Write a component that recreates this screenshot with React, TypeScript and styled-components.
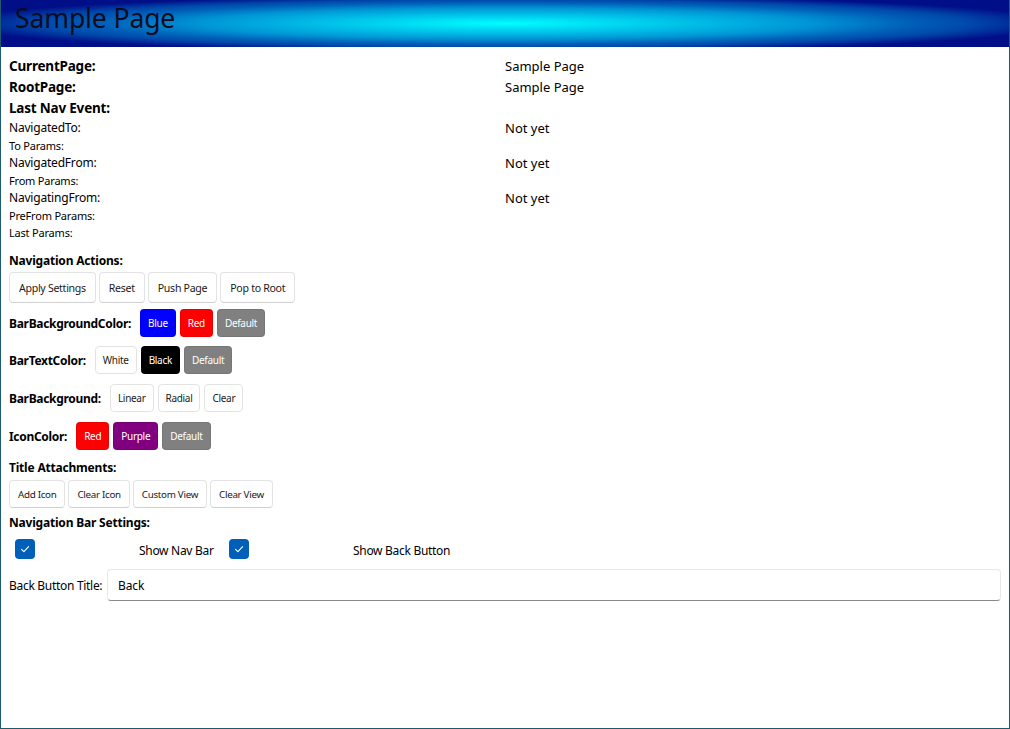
import React from "react";
import styled, { createGlobalStyle } from "styled-components";

const Global = createGlobalStyle`
  html, body { margin: 0; padding: 0; background: #fff; }
  body { font-family: "Noto Sans", "Open Sans", sans-serif; color: #000; }
  * { box-sizing: border-box; }
`;

const Frame = styled.div`
  width: 1010px;
  height: 729px;
  border: 1px solid #1d5a70;
  border-top: none;
  display: flex;
  flex-direction: column;
  overflow: hidden;
`;

const Header = styled.header`
  height: 47px;
  flex: none;
  background: radial-gradient(
    ellipse 55% 60% at 50% 50%,
    #00ffff 0%,
    #00d8f2 20%,
    #0095d5 55%,
    #0060b8 73%,
    #0048aa 84%,
    #000f88 100%
  );
  display: flex;
  align-items: flex-start;
  padding: 0 0 0 14px;
`;

const Title = styled.h1`
  margin: 0;
  font-family: "Noto Sans", sans-serif;
  font-weight: 400;
  font-size: 26.5px;
  letter-spacing: -0.1px;
  color: #0b0b22;
  line-height: normal;
`;

const Body = styled.main`
  padding: 9px 8px 0 8px;
  display: flex;
  flex-direction: column;
`;

const InfoGrid = styled.div`
  display: grid;
  grid-template-columns: 496px 1fr;
`;

const InfoLabel = styled.div<{ $bold?: boolean; $size: number; $h: number }>`
  font-size: ${(p) => p.$size}px;
  font-weight: ${(p) => (p.$bold ? 700 : 400)};
  height: ${(p) => p.$h}px;
  line-height: ${(p) => p.$h}px;
  white-space: nowrap;
  letter-spacing: -0.2px;
`;

const InfoValue = styled.div<{ $h: number }>`
  font-size: 13px;
  height: ${(p) => p.$h}px;
  line-height: ${(p) => p.$h}px;
  white-space: nowrap;
`;

const SectionLabel = styled.div<{ $mt: number }>`
  font-size: 12px;
  font-weight: 700;
  line-height: 17px;
  margin-top: ${(p) => p.$mt}px;
  letter-spacing: -0.2px;
`;

const ButtonRow = styled.div<{ $mt: number }>`
  display: flex;
  gap: 3px;
  margin-top: ${(p) => p.$mt}px;
`;

const ActionButton = styled.button<{ $h: number; $size: number; $pad: number }>`
  height: ${(p) => p.$h}px;
  padding: 0 ${(p) => p.$pad}px;
  font-family: "Noto Sans", sans-serif;
  font-size: ${(p) => p.$size}px;
  color: #1a1a1a;
  background: #fff;
  border: 1px solid #e3e3e3;
  border-bottom-color: #d0d0d0;
  border-radius: 4px;
  letter-spacing: -0.3px;
`;

const OptionRow = styled.div<{ $mt: number }>`
  display: flex;
  align-items: center;
  margin-top: ${(p) => p.$mt}px;
`;

const OptionLabel = styled.div`
  font-size: 12px;
  font-weight: 700;
  margin-right: 9px;
  letter-spacing: -0.3px;
`;

const OptionButtons = styled.div`
  display: flex;
  gap: 4px;
`;

const ColorButton = styled.button<{ $bg?: string; $fg?: string }>`
  height: 28px;
  padding: 0 7px;
  font-family: "Noto Sans", sans-serif;
  font-size: 10px;
  color: ${(p) => p.$fg ?? "#1a1a1a"};
  background: ${(p) => p.$bg ?? "#fff"};
  border: 1px solid ${(p) => (p.$bg ? "rgba(0,0,0,0.08)" : "#e3e3e3")};
  border-radius: 4px;
  letter-spacing: -0.3px;
`;

const CheckRow = styled.div`
  display: flex;
  align-items: center;
  margin-top: 7px;
  height: 22px;
`;

const CheckCell = styled.div`
  width: 130px;
  padding-left: 6px;
  display: flex;
  align-items: center;
`;

const CheckBox = styled.div`
  width: 20px;
  height: 20px;
  border-radius: 4px;
  background: #005fb8;
  display: flex;
  align-items: center;
  justify-content: center;
`;

const CheckText = styled.div<{ $w: number }>`
  width: ${(p) => p.$w}px;
  font-size: 12px;
  letter-spacing: -0.3px;
  padding-top: 2px;
`;

const EntryRow = styled.div`
  display: flex;
  align-items: center;
  margin-top: 9px;
`;

const EntryLabel = styled.div`
  font-size: 12px;
  width: 98px;
  letter-spacing: -0.3px;
`;

const Entry = styled.div`
  flex: 1;
  height: 32px;
  border: 1px solid #e8e8e8;
  border-bottom: 1px solid #8a8a8a;
  border-radius: 4px;
  padding-left: 10px;
  display: flex;
  align-items: center;
  font-size: 12px;
  letter-spacing: -0.1px;
`;

const Check = () => (
  <svg width="12" height="12" viewBox="0 0 12 12">
    <path d="M2.5 6.3 L4.9 8.6 L9.6 3.6" fill="none" stroke="#fff" strokeWidth="1.1" strokeLinecap="round" strokeLinejoin="round" />
  </svg>
);

const info: { label: string; value?: string; bold?: boolean; size: number; h: number }[] = [
  { label: "CurrentPage:", value: "Sample Page", bold: true, size: 13.5, h: 21 },
  { label: "RootPage:", value: "Sample Page", bold: true, size: 13.5, h: 21 },
  { label: "Last Nav Event:", bold: true, size: 13.5, h: 21 },
  { label: "NavigatedTo:", value: "Not yet", size: 12, h: 18 },
  { label: "To Params:", size: 11, h: 17 },
  { label: "NavigatedFrom:", value: "Not yet", size: 12, h: 18 },
  { label: "From Params:", size: 11, h: 17 },
  { label: "NavigatingFrom:", value: "Not yet", size: 12, h: 18 },
  { label: "PreFrom Params:", size: 11, h: 17 },
  { label: "Last Params:", size: 11, h: 17 },
];

export default function App() {
  return (
    <>
      <Global />
      <Frame>
        <Header>
          <Title>Sample Page</Title>
        </Header>
        <Body>
          <InfoGrid>
            {info.map((r) => (
              <React.Fragment key={r.label}>
                <InfoLabel $bold={r.bold} $size={r.size} $h={r.h}>{r.label}</InfoLabel>
                <InfoValue $h={r.h}>{r.value ?? ""}</InfoValue>
              </React.Fragment>
            ))}
          </InfoGrid>

          <SectionLabel $mt={11}>Navigation Actions:</SectionLabel>
          <ButtonRow $mt={3}>
            <ActionButton $h={31} $size={10.6} $pad={9}>Apply Settings</ActionButton>
            <ActionButton $h={31} $size={10.6} $pad={9}>Reset</ActionButton>
            <ActionButton $h={31} $size={10.6} $pad={9}>Push Page</ActionButton>
            <ActionButton $h={31} $size={10.6} $pad={9}>Pop to Root</ActionButton>
          </ButtonRow>

          <OptionRow $mt={6}>
            <OptionLabel>BarBackgroundColor:</OptionLabel>
            <OptionButtons>
              <ColorButton $bg="#0000ff" $fg="#fff">Blue</ColorButton>
              <ColorButton $bg="#ff0000" $fg="#fff">Red</ColorButton>
              <ColorButton $bg="#808080" $fg="#fff">Default</ColorButton>
            </OptionButtons>
          </OptionRow>

          <OptionRow $mt={9}>
            <OptionLabel>BarTextColor:</OptionLabel>
            <OptionButtons>
              <ColorButton>White</ColorButton>
              <ColorButton $bg="#000" $fg="#fff">Black</ColorButton>
              <ColorButton $bg="#808080" $fg="#fff">Default</ColorButton>
            </OptionButtons>
          </OptionRow>

          <OptionRow $mt={10}>
            <OptionLabel>BarBackground:</OptionLabel>
            <OptionButtons>
              <ColorButton>Linear</ColorButton>
              <ColorButton>Radial</ColorButton>
              <ColorButton>Clear</ColorButton>
            </OptionButtons>
          </OptionRow>

          <OptionRow $mt={10}>
            <OptionLabel>IconColor:</OptionLabel>
            <OptionButtons>
              <ColorButton $bg="#ff0000" $fg="#fff">Red</ColorButton>
              <ColorButton $bg="#800080" $fg="#fff">Purple</ColorButton>
              <ColorButton $bg="#808080" $fg="#fff">Default</ColorButton>
            </OptionButtons>
          </OptionRow>

          <SectionLabel $mt={9}>Title Attachments:</SectionLabel>
          <ButtonRow $mt={4}>
            <ActionButton $h={28} $size={9.8} $pad={8}>Add Icon</ActionButton>
            <ActionButton $h={28} $size={9.8} $pad={8}>Clear Icon</ActionButton>
            <ActionButton $h={28} $size={9.8} $pad={8}>Custom View</ActionButton>
            <ActionButton $h={28} $size={9.8} $pad={8}>Clear View</ActionButton>
          </ButtonRow>

          <SectionLabel $mt={6}>Navigation Bar Settings:</SectionLabel>
          <CheckRow>
            <CheckCell><CheckBox><Check /></CheckBox></CheckCell>
            <CheckText $w={84}>Show Nav Bar</CheckText>
            <CheckCell><CheckBox><Check /></CheckBox></CheckCell>
            <CheckText $w={120}>Show Back Button</CheckText>
          </CheckRow>

          <EntryRow>
            <EntryLabel>Back Button Title:</EntryLabel>
            <Entry>Back</Entry>
          </EntryRow>
        </Body>
      </Frame>
    </>
  );
}
